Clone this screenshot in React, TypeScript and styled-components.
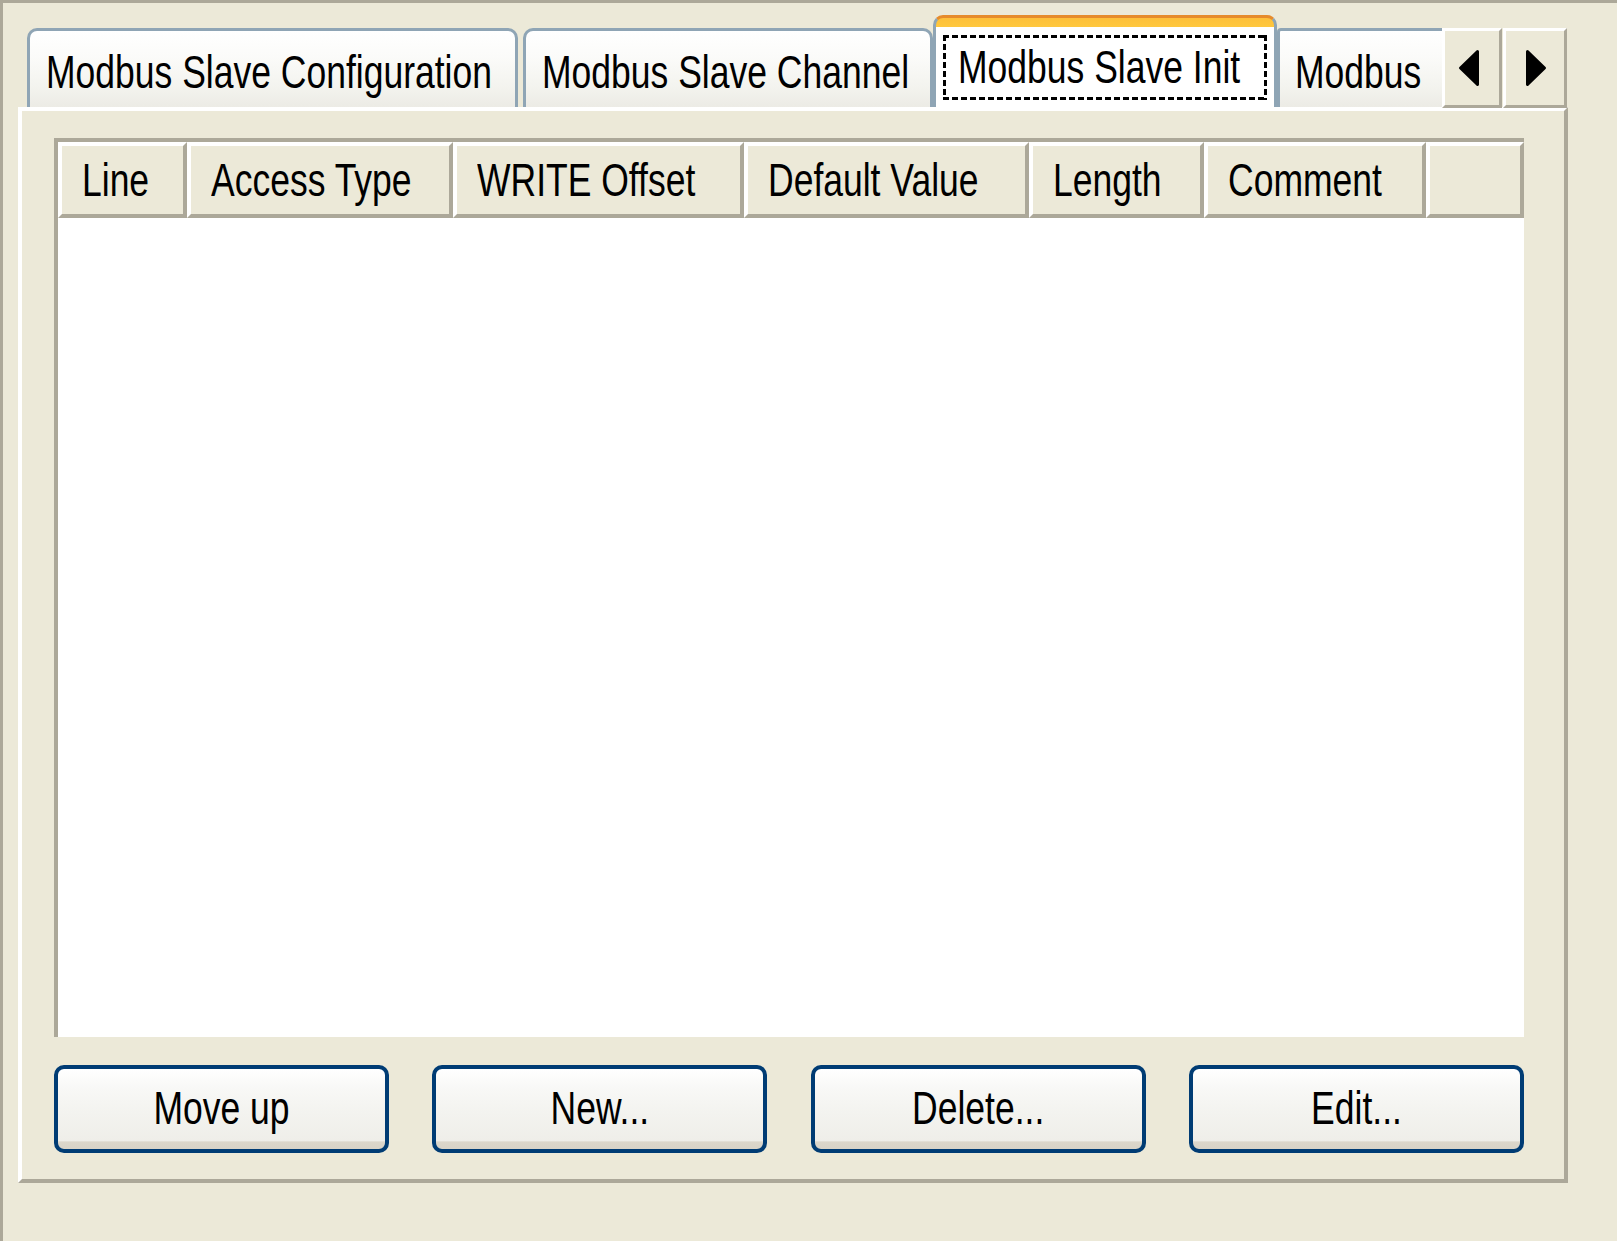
import React from "react";
import styled, { createGlobalStyle } from "styled-components";

const BEIGE = "#ece9d8";
const SHADOW = "#aca899";
const TAB_EDGE = "#8fa5b5";
const NAVY = "#003c74";

const GlobalStyle = createGlobalStyle`
  html, body { margin: 0; padding: 0; background: #ffffff; }
  body { font-family: "Liberation Sans", Arial, Helvetica, sans-serif; color: #000; }
  * { box-sizing: border-box; }
`;

const Frame = styled.div`
  width: 1617px;
  height: 1241px;
  background: ${BEIGE};
  border-top: 3px solid ${SHADOW};
  border-left: 3px solid ${SHADOW};
  padding: 12px 49px 0 15px;
  display: flex;
  flex-direction: column;
`;

const TabStrip = styled.div`
  display: flex;
  align-items: flex-end;
  height: 92px;
  padding: 0 1px 0 9px;
  position: relative;
  z-index: 1;
`;

const Label = styled.span`
  display: inline-block;
  font-family: "Liberation Sans", Arial, Helvetica, sans-serif;
  font-size: 35.5px;
  line-height: 40px;
  white-space: nowrap;
  transform: scaleY(1.28);
  transform-origin: center;
`;

const Tab = styled.div<{ $width: number; $gap?: number; $clipped?: boolean }>`
  flex: none;
  width: ${(p) => p.$width}px;
  height: 79px;
  margin-left: ${(p) => p.$gap ?? 0}px;
  padding: 22px 0 0 ${(p) => (p.$clipped ? 15 : 16)}px;
  border: 3px solid ${TAB_EDGE};
  border-bottom: none;
  border-right-width: ${(p) => (p.$clipped ? 0 : 3)}px;
  border-radius: ${(p) => (p.$clipped ? "4px 0 0 0" : "10px 10px 0 0")};
  background: linear-gradient(
    to bottom,
    #ffffff 0%,
    #fbfbf9 35%,
    #f3f3ee 75%,
    #ecebe5 100%
  );
  overflow: hidden;
  white-space: nowrap;
`;

const ActiveTab = styled.div`
  flex: none;
  width: 344px;
  height: 92px;
  padding: 17px 7px 7px 7px;
  border-top: 3px solid #e68b2c;
  border-left: 3px solid ${TAB_EDGE};
  border-right: 3px solid ${TAB_EDGE};
  border-radius: 10px 10px 0 0;
  background: linear-gradient(to bottom, #fdc03a 0px, #ffc83e 9px, #ffffff 9px);
`;

const FocusRing = styled.div`
  height: 100%;
  display: flex;
  align-items: center;
  padding: 0 0 0 15px;
  background:
    repeating-linear-gradient(90deg, #000 0 6px, transparent 6px 9px) left top / 100% 3px no-repeat,
    repeating-linear-gradient(90deg, #000 0 6px, transparent 6px 9px) left bottom / 100% 3px no-repeat,
    repeating-linear-gradient(180deg, #000 0 6px, transparent 6px 9px) left top / 3px 100% no-repeat,
    repeating-linear-gradient(180deg, #000 0 6px, transparent 6px 9px) right top / 3px 100% no-repeat;
`;

const ScrollButton = styled.button<{ $width: number; $gap?: number; $nudge: number }>`
  flex: none;
  width: ${(p) => p.$width}px;
  height: 80px;
  margin: 0 0 -1px ${(p) => p.$gap ?? 0}px;
  padding: 0 0 0 ${(p) => p.$nudge}px;
  border: 3px solid;
  border-color: #ffffff ${SHADOW} ${SHADOW} #ffffff;
  background: ${BEIGE};
  display: flex;
  align-items: center;
  justify-content: center;
  cursor: default;
`;

const ArrowSlot = styled.span<{ $shift: number }>`
  display: flex;
  margin-right: ${(p) => p.$shift}px;
`;

const Panel = styled.div`
  width: 1550px;
  border: 4px solid;
  border-color: #ffffff ${SHADOW} ${SHADOW} #ffffff;
  padding: 27px 40px 26px 32px;
  background: ${BEIGE};
  display: flex;
  flex-direction: column;
  gap: 28px;
`;

const Table = styled.div`
  height: 899px;
  border-top: 4px solid ${SHADOW};
  border-left: 4px solid ${SHADOW};
  background: #ffffff;
  display: flex;
  flex-direction: column;
`;

const HeaderRow = styled.div`
  display: flex;
  height: 76px;
`;

const HeaderCell = styled.div<{ $width?: number }>`
  flex: ${(p) => (p.$width ? `0 0 ${p.$width}px` : "1 1 auto")};
  border: 4px solid;
  border-color: #ffffff ${SHADOW} ${SHADOW} #ffffff;
  background: ${BEIGE};
  display: flex;
  align-items: center;
  padding: 1px 0 0 20px;
  overflow: hidden;
`;

const ButtonRow = styled.div`
  display: flex;
  justify-content: space-between;
`;

const PushButton = styled.button`
  width: 335px;
  height: 88px;
  border: 4px solid ${NAVY};
  border-radius: 10px;
  padding: 0;
  background: linear-gradient(
    to bottom,
    #ffffff 0%,
    #f8f8f6 25%,
    #f3f3ef 55%,
    #efeee9 90%,
    #dcd7cb 91%,
    #d8d3c7 100%
  );
  display: flex;
  align-items: center;
  justify-content: center;
  color: #000;
  cursor: default;
`;

const columns: { title: string; width?: number }[] = [
  { title: "Line", width: 129 },
  { title: "Access Type", width: 266 },
  { title: "WRITE Offset", width: 291 },
  { title: "Default Value", width: 285 },
  { title: "Length", width: 175 },
  { title: "Comment", width: 222 },
  { title: "" },
];

const buttons = ["Move up", "New...", "Delete...", "Edit..."];

const LeftArrow = () => (
  <svg width="22" height="38" viewBox="0 0 22 38">
    <path d="M19.5 2.5 L2.5 19 L19.5 35.5 Z" fill="#000" stroke="#000" strokeWidth="3" strokeLinejoin="round" />
  </svg>
);

const RightArrow = () => (
  <svg width="22" height="38" viewBox="0 0 22 38">
    <path d="M2.5 2.5 L19.5 19 L2.5 35.5 Z" fill="#000" stroke="#000" strokeWidth="3" strokeLinejoin="round" />
  </svg>
);

export default function App() {
  return (
    <>
      <GlobalStyle />
      <Frame>
        <TabStrip>
          <Tab $width={491}>
            <Label>Modbus Slave Configuration</Label>
          </Tab>
          <Tab $width={410} $gap={5}>
            <Label>Modbus Slave Channel</Label>
          </Tab>
          <ActiveTab>
            <FocusRing>
              <Label>Modbus Slave Init</Label>
            </FocusRing>
          </ActiveTab>
          <Tab $width={165} $clipped>
            <Label>Modbus</Label>
          </Tab>
          <ScrollButton $width={60} $nudge={0} aria-label="scroll left">
            <ArrowSlot $shift={6}>
              <LeftArrow />
            </ArrowSlot>
          </ScrollButton>
          <ScrollButton $width={64} $gap={1} $nudge={2} aria-label="scroll right">
            <RightArrow />
          </ScrollButton>
        </TabStrip>
        <Panel>
          <Table>
            <HeaderRow>
              {columns.map((c, i) => (
                <HeaderCell key={i} $width={c.width}>
                  {c.title && <Label>{c.title}</Label>}
                </HeaderCell>
              ))}
            </HeaderRow>
          </Table>
          <ButtonRow>
            {buttons.map((b) => (
              <PushButton key={b}>
                <Label>{b}</Label>
              </PushButton>
            ))}
          </ButtonRow>
        </Panel>
      </Frame>
    </>
  );
}
